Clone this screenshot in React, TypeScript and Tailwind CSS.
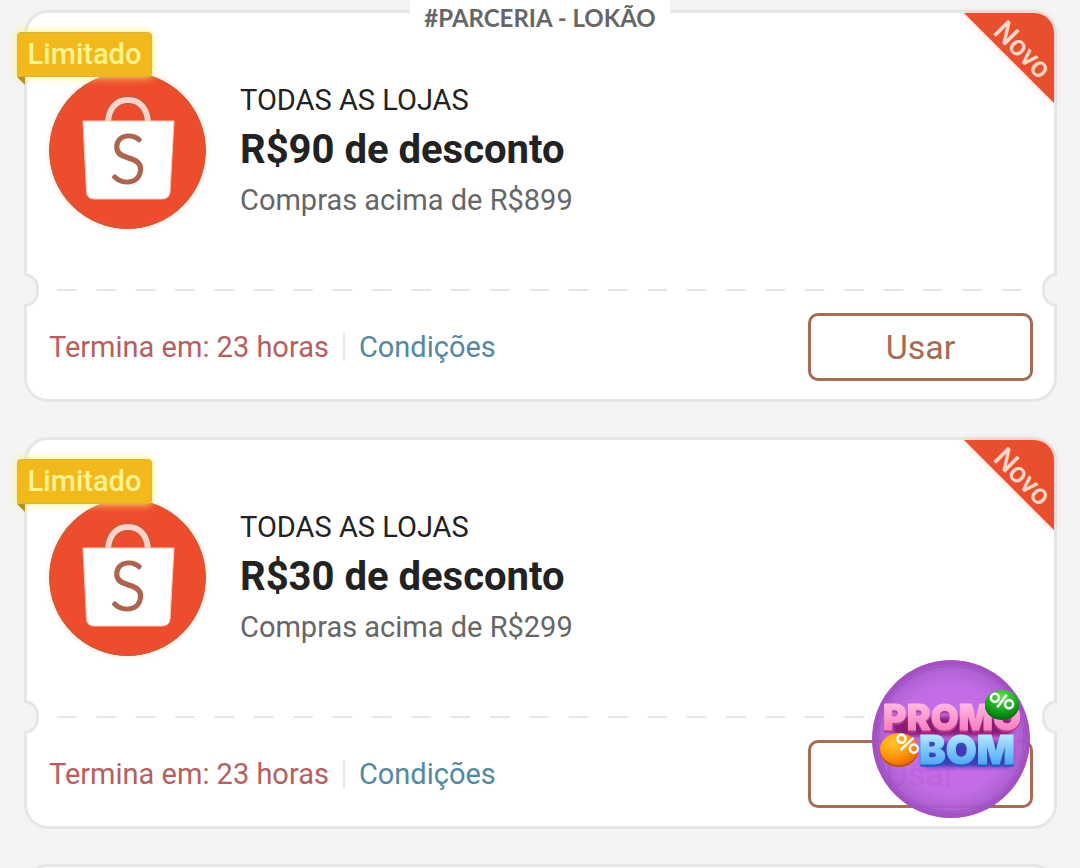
import React from 'react';

interface Coupon {
  id: number;
  store: string;
  title: string;
  minimum: string;
  expires: string;
  promoted?: boolean;
}

const coupons: Coupon[] = [
  {
    id: 1,
    store: 'TODAS AS LOJAS',
    title: 'R$90 de desconto',
    minimum: 'Compras acima de R$899',
    expires: 'Termina em: 23 horas',
  },
  {
    id: 2,
    store: 'TODAS AS LOJAS',
    title: 'R$30 de desconto',
    minimum: 'Compras acima de R$299',
    expires: 'Termina em: 23 horas',
    promoted: true,
  },
];

function StoreLogo() {
  return (
    <svg viewBox="0 0 157 157" className="size-[157px] shrink-0 rounded-full shadow-[0_0_5px_#ffd5c8]" aria-hidden="true">
      <circle cx="78.5" cy="78.5" r="78.5" fill="#ee4d2d" />
      <circle cx="78.5" cy="78.5" r="77.5" fill="none" stroke="#d05a38" strokeWidth="2" />
      <path d="M59 52C59 37 67 28 79 28s20 9 20 24" fill="none" stroke="#c4593c" strokeWidth="9" />
      <path d="M59 52C59 37 67 28 79 28s20 9 20 24" fill="none" stroke="#ffd3c9" strokeWidth="6" />
      <path d="M34 49h91l-4 71q-.6 7-8 7H45q-7 0-7.500-7z" fill="#fff" stroke="#ffc9ba" strokeWidth="1" />
      <text x="79" y="111" textAnchor="middle" fontFamily="Lato, sans-serif" fontSize="67" fontWeight="300" fill="#ad6450" stroke="#ad6450" strokeWidth="2">
        S
      </text>
    </svg>
  );
}

function PromoBadge() {
  return (
    <svg viewBox="0 0 158 158" className="absolute right-6 bottom-2 size-[158px]" role="img" aria-label="Promo Bom">
      <defs>
        <radialGradient id="disc">
          <stop offset="0" stopColor="#c266e8" />
          <stop offset="0.7" stopColor="#be64e3" />
          <stop offset="1" stopColor="#a052c4" />
        </radialGradient>
        <linearGradient id="pink" x1="0" y1="0" x2="0" y2="1">
          <stop offset="0.2" stopColor="#ffb8e2" />
          <stop offset="0.8" stopColor="#f77fc0" />
        </linearGradient>
        <linearGradient id="blue" x1="0" y1="0" x2="0" y2="1">
          <stop offset="0.2" stopColor="#b5e8ff" />
          <stop offset="0.8" stopColor="#4fa8f5" />
        </linearGradient>
        <radialGradient id="green" cx="0.5" cy="0.25" r="0.8">
          <stop offset="0" stopColor="#5ee34c" />
          <stop offset="0.6" stopColor="#16a51d" />
          <stop offset="1" stopColor="#077010" />
        </radialGradient>
        <radialGradient id="orange" cx="0.35" cy="0.3" r="0.8">
          <stop offset="0" stopColor="#ffc52e" />
          <stop offset="0.6" stopColor="#ff9208" />
          <stop offset="1" stopColor="#e06500" />
        </radialGradient>
        <filter id="soft" x="-20%" y="-40%" width="140%" height="180%">
          <feGaussianBlur stdDeviation="2" />
        </filter>
      </defs>
      <circle cx="79" cy="79" r="79" fill="url(#disc)" fillOpacity="0.95" />
      <circle cx="79" cy="79" r="76.500" fill="none" stroke="#a54fc3" strokeWidth="4" />
      <circle cx="79" cy="79" r="73" fill="none" stroke="#9354bd" strokeWidth="1" />
      <rect x="20" y="57" width="120" height="19" rx="6" fill="#8a1a78" filter="url(#soft)" />
      <rect x="50" y="82" width="90" height="25" rx="5" fill="#4338b8" filter="url(#soft)" />
      <g fontFamily="Inter, sans-serif" fontWeight="900" strokeLinejoin="round">
        <text x="80" y="70" textAnchor="middle" fontSize="36" fill="url(#pink)" stroke="url(#pink)" strokeWidth="1" className="drop-shadow-[0_2px_0_#b4398a]">
          PROMO
        </text>
        <ellipse cx="27" cy="91" rx="19" ry="16" fill="#bd5200" />
        <ellipse cx="27" cy="89" rx="19" ry="16" fill="url(#orange)" />
        <text x="95" y="104" textAnchor="middle" fontSize="40" fill="url(#blue)" stroke="url(#blue)" strokeWidth="1" className="drop-shadow-[0_2px_0_#2457bd]">
          BOM
        </text>
      </g>
      <ellipse cx="130" cy="46" rx="17" ry="14" fill="#087211" />
      <ellipse cx="130" cy="44" rx="17" ry="14" fill="url(#green)" />
      <g fill="none" stroke="#fff" strokeWidth="2.500">
        <g transform="rotate(10 130 41)">
          <circle cx="122.500" cy="39" r="4" />
          <circle cx="137.500" cy="43" r="4" />
          <path d="M133.500 34l-7 14" />
        </g>
        <g transform="rotate(20 35 84)">
          <circle cx="28" cy="81" r="4" />
          <circle cx="43" cy="86" r="4" />
          <path d="M39 76l-8 16" />
        </g>
      </g>
    </svg>
  );
}

function CouponCard({ coupon }: { coupon: Coupon }) {
  return (
    <article className="relative shrink-0 rounded-[24px] border-3 border-[#e6e6e6] bg-white">
      {/* Limited tag */}
      <div className="absolute top-[19px] -left-[10px]">
        <div className="flex h-[45px] w-[135px] items-center justify-center rounded-[4px] rounded-bl-none border border-[#d5b63f] bg-[#f1b91b] text-[29px] font-medium text-[#fff38f] shadow-[0_0_8px_#fff06a]">
          Limitado
        </div>
        <div className="size-2 bg-[#b8911f] [clip-path:polygon(0_0,100%_0,100%_100%)]" />
      </div>

      {/* New ribbon */}
      <div className="absolute top-0 right-0 flex size-[90px] items-center justify-center">
        <div className="absolute inset-0 drop-shadow-[0_0_3px_#ffc4b4]">
          <div className="size-full rounded-tr-[20px] bg-[#e84f2e] [clip-path:polygon(0_0,100%_0,100%_100%)]" />
        </div>
        <span className="relative rotate-45 pb-8 pl-2 text-[29px] leading-8 font-medium text-[#ffd8cb]">Novo</span>
      </div>

      <div className="flex gap-[34px] px-[22px] pt-[59px] pb-[60px]">
        <StoreLogo />
        <div className="flex flex-col gap-[2px] pt-1 text-[29px] leading-12">
          <p className="text-[#222]">{coupon.store}</p>
          <h2 className="text-[40px] leading-12 font-bold text-[#222]">{coupon.title}</h2>
          <p className="text-[#666]">{coupon.minimum}</p>
        </div>
      </div>

      {/* Perforation */}
      <div className="relative h-[2px]">
        <span className="absolute -top-4 -left-[3px] h-[34px] w-[15px] rounded-r-full border-3 border-l-0 border-[#e6e6e6] bg-[#f4f4f4]" />
        <span className="absolute -top-4 -right-[3px] h-[34px] w-[15px] rounded-l-full border-3 border-r-0 border-[#e6e6e6] bg-[#f4f4f4]" />
        <div className="mr-[13px] ml-[30px] h-full bg-[linear-gradient(90deg,#e6e6e6_50%,transparent_50%)] bg-[length:39px_2px] bg-repeat-round" />
      </div>

      <div className="flex items-center justify-between pt-[22px] pr-[21px] pb-[18px] pl-[22px]">
        <div className="flex items-center gap-[14px] text-[29px] leading-10">
          <span className="text-[#b5605f]">{coupon.expires}</span>
          <span className="h-7 w-[2px] bg-[#e6e6e6]" />
          <a href="#condicoes" className="text-[#5488a3]">Condições</a>
        </div>
        <button className="h-[68px] w-[225px] rounded-[10px] border-3 border-[#a66c53] text-[34px] text-[#a66c53]">
          Usar
        </button>
      </div>

      {coupon.promoted && <PromoBadge />}
    </article>
  );
}

export default function App() {
  return (
    <main className="relative flex h-screen flex-col gap-[35px] overflow-hidden bg-[#f4f4f4] pt-[10px] pr-[23px] pl-6 font-['Roboto',sans-serif]">
      {coupons.map((coupon) => (
        <CouponCard key={coupon.id} coupon={coupon} />
      ))}
      <div className="h-[392px] shrink-0 rounded-[24px] border-3 border-[#e6e6e6] bg-white" />

      <div className="absolute inset-x-0 top-0 flex justify-center">
        <p className="h-9 bg-white px-[14px] text-[24px] leading-9 font-bold text-[#666] font-['Lato',sans-serif]">
          #PARCERIA - LOKÃO
        </p>
      </div>
    </main>
  );
}
